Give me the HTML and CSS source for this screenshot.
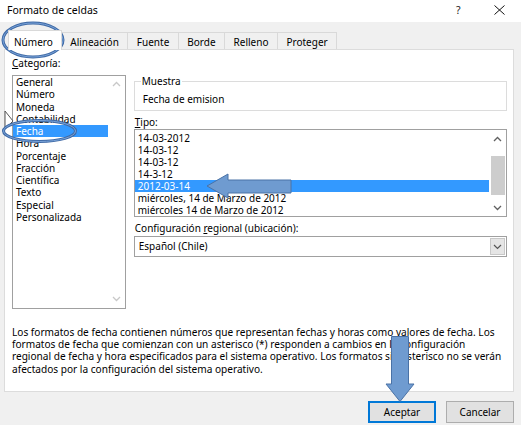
FILE: index.html
```html
<!DOCTYPE html>
<html lang="es">
<head>
<meta charset="utf-8">
<title>Formato de celdas</title>
<link rel="stylesheet" href="styles.css">
</head>
<body>
<div class="window">
  <div class="titlebar">
    <span class="title">Formato de celdas</span>
    <span class="help">?</span>
    <span class="close"><svg width="11" height="10" viewBox="0 0 11 10"><path d="M0.5 0.5 L10.5 9.5 M10.5 0.5 L0.5 9.5" stroke="#111" stroke-width="1" fill="none"/></svg></span>
  </div>

  <div class="tabs">
    <div class="tab active">Número</div>
    <div class="tab">Alineación</div>
    <div class="tab">Fuente</div>
    <div class="tab">Borde</div>
    <div class="tab">Relleno</div>
    <div class="tab">Proteger</div>
  </div>

  <div class="panel">
    <div class="top">
      <div class="cat-col">
        <div class="label"><u>C</u>ategoría:</div>
        <div class="listbox cat-list">
          <ul class="items">
            <li>General</li>
            <li>Número</li>
            <li>Moneda</li>
            <li>Contabilidad</li>
            <li class="sel">Fecha</li>
            <li>Hora</li>
            <li>Porcentaje</li>
            <li>Fracción</li>
            <li>Científica</li>
            <li>Texto</li>
            <li>Especial</li>
            <li>Personalizada</li>
          </ul>
          <div class="scrollbar disabled">
            <svg class="chev" width="9" height="6" viewBox="0 0 9 6"><path d="M1 5 L4.5 1.5 L8 5" stroke="currentColor" stroke-width="1.3" fill="none"/></svg>
            <svg class="chev" width="9" height="6" viewBox="0 0 9 6"><path d="M1 1 L4.5 4.5 L8 1" stroke="currentColor" stroke-width="1.3" fill="none"/></svg>
          </div>
        </div>
      </div>

      <div class="right-col">
        <fieldset class="sample">
          <legend>Muestra</legend>
          <div class="sample-text">Fecha de emision</div>
        </fieldset>

        <div class="label tipo-label"><u>T</u>ipo:</div>
        <div class="listbox type-list">
          <ul class="items">
            <li>14-03-2012</li>
            <li>14-03-12</li>
            <li>14-03-12</li>
            <li>14-3-12</li>
            <li class="sel">2012-03-14</li>
            <li>miércoles, 14 de Marzo de 2012</li>
            <li>miércoles 14 de Marzo de 2012</li>
          </ul>
          <div class="scrollbar">
            <svg class="chev" width="9" height="6" viewBox="0 0 9 6"><path d="M1 5 L4.5 1.5 L8 5" stroke="currentColor" stroke-width="1.3" fill="none"/></svg>
            <div class="track"><div class="thumb"></div></div>
            <svg class="chev" width="9" height="6" viewBox="0 0 9 6"><path d="M1 1 L4.5 4.5 L8 1" stroke="currentColor" stroke-width="1.3" fill="none"/></svg>
          </div>
        </div>

        <div class="label region-label">Configuración <u>r</u>egional (ubicación):</div>
        <div class="select">
          <span class="select-value">Español (Chile)</span>
          <span class="select-arrow"><svg width="9" height="6" viewBox="0 0 9 6"><path d="M1 1 L4.5 4.5 L8 1" stroke="#555" stroke-width="1.2" fill="none"/></svg></span>
        </div>
      </div>
    </div>

    <p class="desc">Los formatos de fecha contienen números que representan fechas y horas como valores de fecha. Los<br>formatos de fecha que comienzan con un asterisco (*) responden a cambios en la configuración<br>regional de fecha y hora especificados para el sistema operativo. Los formatos sin asterisco no se verán<br>afectados por la configuración del sistema operativo.</p>
  </div>

  <div class="buttons">
    <button class="btn primary">Aceptar</button>
    <button class="btn">Cancelar</button>
  </div>

  <svg class="annotations" width="521" height="425" viewBox="0 0 521 425">
    <path d="M5 111 L5 129 L9 125 L13 121 Z" fill="#fff" stroke="#555" stroke-width="1"/>
    <ellipse cx="33" cy="40" rx="30" ry="17" fill="none" stroke="#3f6aa6" stroke-width="3"/>
    <ellipse cx="33" cy="40" rx="30" ry="17" fill="none" stroke="#7aa3d8" stroke-width="1"/>
    <ellipse cx="39.5" cy="131" rx="36" ry="10.5" fill="none" stroke="#3f6aa6" stroke-width="3"/>
    <ellipse cx="39.5" cy="131" rx="36" ry="10.5" fill="none" stroke="#7aa3d8" stroke-width="1"/>
    <path d="M207 186 L228 174 L228 180 L291 180 L291 193 L228 193 L228 198 Z" fill="#6f9bd0" stroke="#4a72a6" stroke-width="1"/>
    <path d="M391.5 336.5 L408.5 336.5 L408.5 384 L414 384 L400 401.5 L386 384 L391.5 384 Z" fill="#6f9bd0" stroke="#4a72a6" stroke-width="1"/>
  </svg>
</div>
</body>
</html>
```

FILE: styles.css
```css
* { box-sizing: border-box; }

html, body {
  margin: 0;
  padding: 0;
}

body {
  width: 521px;
  height: 425px;
  overflow: hidden;
  background: #f0f0f0;
  font-family: "Noto Sans", "Open Sans", sans-serif;
  font-size: 10px;
  color: #000;
}

.window {
  position: relative;
  width: 521px;
  height: 425px;
  background: #f0f0f0;
}

/* Title bar */
.titlebar {
  height: 22px;
  background: #fff;
  display: flex;
  align-items: center;
  padding-left: 7px;
}

.title {
  font-size: 10.5px;
  flex: 1;
  line-height: 14px;
  margin-top: -3px;
}

.help {
  font-size: 10.5px;
  width: 12px;
  color: #222;
  margin-right: 26px;
  margin-top: -3px;
}

.close {
  width: 11px;
  height: 10px;
  margin-right: 16px;
  margin-top: -3px;
  display: flex;
}

/* Tabs */
.tabs {
  height: 27px;
  display: flex;
  align-items: flex-end;
  padding-left: 8px;
}

.tab {
  height: 17px;
  line-height: 15px;
  padding: 2px 8.5px 0;
  border: 1px solid #d9d9d9;
  border-bottom: none;
  border-left: none;
  background: #f0f0f0;
  white-space: nowrap;
}

.tab.active {
  height: 20px;
  line-height: 15px;
  padding: 4px 8px 0 5px;
  background: #fff;
  border-left: 1px solid #d9d9d9;
  position: relative;
  top: 1px;
  z-index: 1;
}

/* Panel */
.panel {
  margin-left: 4px;
  width: 510px;
  height: 343px;
  background: #fff;
  border: 1px solid #dcdcdc;
  padding: 0 6px 0 7px;
}

.top {
  display: flex;
  gap: 8px;
}

.label {
  line-height: 13px;
  white-space: nowrap;
}

.cat-col {
  width: 114px;
  padding-top: 7px;
}

.cat-col .label {
  margin-bottom: 5px;
}

.listbox {
  border: 1px solid #a0a0a0;
  display: flex;
  background: #fff;
}

.items {
  list-style: none;
  margin: 0;
  padding: 0;
  flex: 1;
}

.items li {
  white-space: nowrap;
}

.items li.sel {
  background: #3399ff;
  color: #fff;
}

.cat-list {
  height: 234px;
}

.cat-list .items li {
  height: 12.25px;
  line-height: 12.25px;
  padding-left: 3px;
}

.scrollbar {
  width: 17px;
  display: flex;
  flex-direction: column;
  align-items: center;
  justify-content: space-between;
  padding: 5px 0 6px;
  color: #606060;
}

.scrollbar.disabled {
  color: #c8c8c8;
}

.chev {
  display: block;
}

.right-col {
  width: 374px;
  padding-top: 25px;
}

.sample {
  margin: 0;
  padding: 6px 5px 2px 6px;
  border: 1px solid #dcdcdc;
  height: 36px;
  min-inline-size: 0;
}

.sample legend {
  padding: 0 1px;
  line-height: 12px;
}

.sample-text {
  line-height: 13px;
  padding-left: 2px;
}

.tipo-label {
  margin-top: 5px;
  line-height: 12px;
  padding-left: 1px;
}

.type-list {
  margin-top: 1px;
  height: 88px;
  padding-top: 2px;
}

.type-list .items li {
  height: 12px;
  line-height: 12px;
  padding-left: 3px;
}

.type-list .scrollbar {
  margin-top: -2px;
  padding: 6px 0 5px;
}

.track {
  flex: 1;
  width: 100%;
  padding-top: 14px;
  display: flex;
  justify-content: center;
}

.thumb {
  width: 14px;
  height: 39px;
  background: #cdcdcd;
}

.region-label {
  margin-top: 5px;
  line-height: 12px;
  padding-left: 1px;
}

.select {
  margin-top: 2px;
  height: 21px;
  border: 1px solid #a0a0a0;
  display: flex;
  align-items: stretch;
}

.select-value {
  flex: 1;
  line-height: 19px;
  padding-left: 4px;
}

.select-arrow {
  width: 15px;
  margin: 1px;
  background: #e5e5e5;
  border: 1px solid #c8c8c8;
  display: flex;
  align-items: center;
  justify-content: center;
}

.desc {
  margin: 17px 0 0;
  font-size: 10.1px;
  line-height: 12.2px;
  white-space: nowrap;
}

/* Buttons */
.buttons {
  display: flex;
  justify-content: flex-end;
  gap: 10px;
  padding-right: 7px;
  margin-top: 9px;
}

.btn {
  width: 68px;
  height: 22px;
  font-family: inherit;
  font-size: 10px;
  color: #000;
  background: #e1e1e1;
  border: 1px solid #adadad;
  padding: 0;
}

.btn.primary {
  border: 2px solid #0078d7;
}

/* Annotation overlay */
.annotations {
  position: absolute;
  left: 0;
  top: 0;
  pointer-events: none;
}
```
